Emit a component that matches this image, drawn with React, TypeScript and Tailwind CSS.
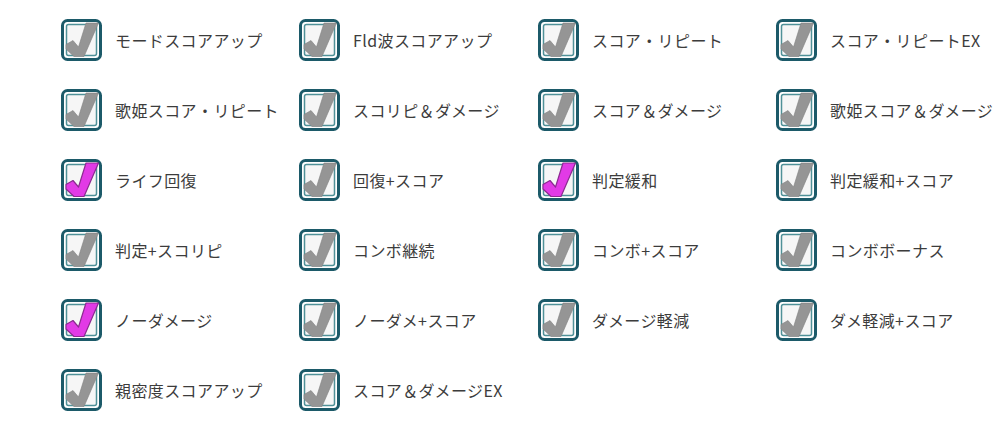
import React from "react";

const items: { label: string; on?: boolean }[] = [
  { label: "モードスコアアップ" },
  { label: "Fld波スコアアップ" },
  { label: "スコア・リピート" },
  { label: "スコア・リピートEX" },
  { label: "歌姫スコア・リピート" },
  { label: "スコリピ＆ダメージ" },
  { label: "スコア＆ダメージ" },
  { label: "歌姫スコア＆ダメージ" },
  { label: "ライフ回復", on: true },
  { label: "回復+スコア" },
  { label: "判定緩和", on: true },
  { label: "判定緩和+スコア" },
  { label: "判定+スコリピ" },
  { label: "コンボ継続" },
  { label: "コンボ+スコア" },
  { label: "コンボボーナス" },
  { label: "ノーダメージ", on: true },
  { label: "ノーダメ+スコア" },
  { label: "ダメージ軽減" },
  { label: "ダメ軽減+スコア" },
  { label: "親密度スコアアップ" },
  { label: "スコア＆ダメージEX" },
];

const CheckBox = ({ on }: { on?: boolean }) => (
  <svg width="41" height="42" viewBox="0 0 41 42" className="shrink-0">
    <rect x="1.5" y="1.5" width="38" height="39" rx="5" fill="#fff" stroke="#1c5a69" strokeWidth="3" />
    <rect x="5.5" y="5.5" width="30" height="31" rx="2" fill="#f6f6f6" stroke="#4f9198" strokeWidth="1.5" />
    <polygon
      points="5,25.5 12,21.5 17.5,28 25,4 37.5,4 23,37.5 13,37.5 5,30"
      fill={on ? "#e23ae6" : "#959595"}
      stroke={on ? "#8c2a90" : "#828282"}
      strokeWidth={on ? 1.2 : 0.6}
      strokeLinejoin="round"
    />
  </svg>
);

export default function App() {
  return (
    <div className="w-[1000px] h-[436px] bg-white overflow-hidden pl-[61px] pt-[19px]" style={{ fontFamily: '"Noto Sans CJK JP", "Noto Sans", sans-serif' }}>
      <div className="grid grid-cols-[238px_239px_238px_200px] gap-y-[28px]">
        {items.map((it) => (
          <div key={it.label} className="flex items-center gap-[13px] h-[42px]">
            <CheckBox on={it.on} />
            <span className="text-[16px] text-[#3c3c3c] whitespace-nowrap tracking-[0.4px]">{it.label}</span>
          </div>
        ))}
      </div>
    </div>
  );
}
